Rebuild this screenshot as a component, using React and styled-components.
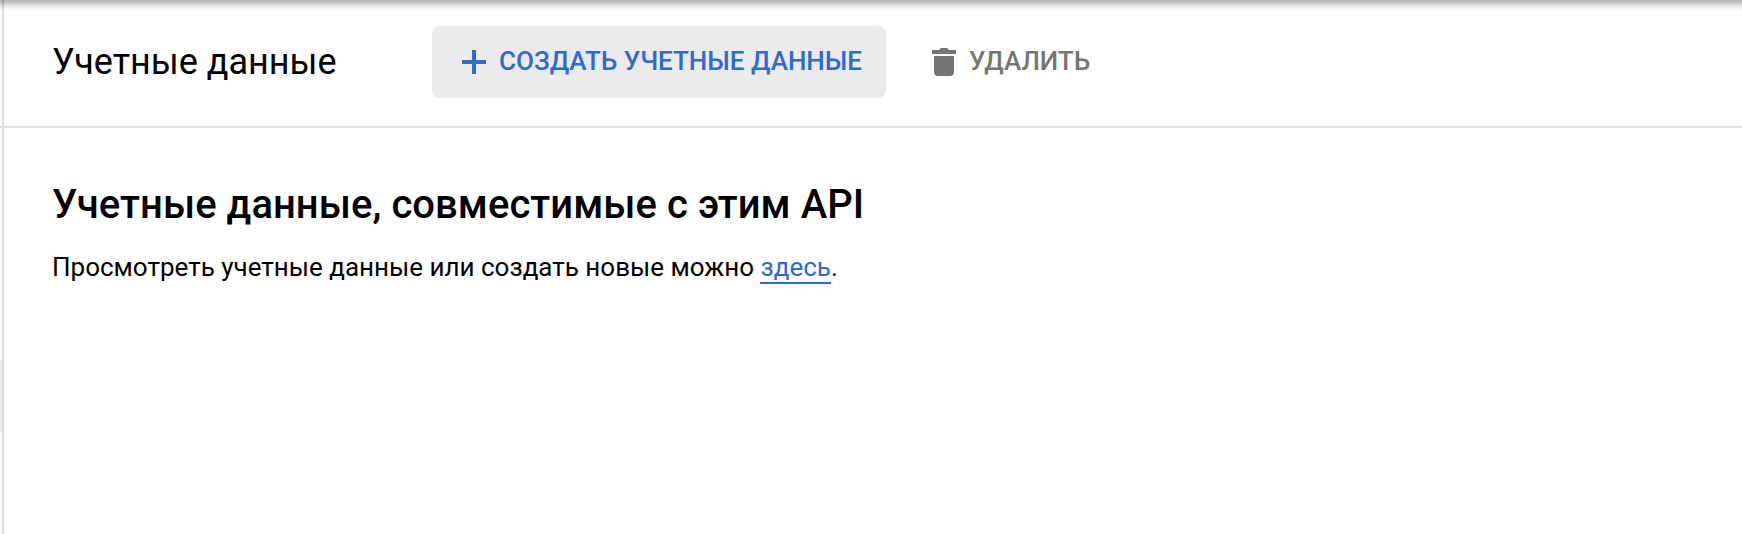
import React from "react";
import styled, { createGlobalStyle } from "styled-components";

const GlobalStyle = createGlobalStyle`
  body {
    margin: 0;
    background: #fefefe;
    color: #000;
    font-family: Roboto, "Liberation Sans", sans-serif;
    overflow: hidden;
  }
`;

const Page = styled.div`
  position: relative;
  display: flex;
  height: 534px;
`;

const TopShadow = styled.div`
  position: absolute;
  inset: 0 0 auto;
  height: 12px;
  pointer-events: none;
  background: linear-gradient(
    rgba(0, 0, 0, 0.3) 0,
    rgba(0, 0, 0, 0.21) 3px,
    rgba(0, 0, 0, 0.09) 6px,
    rgba(0, 0, 0, 0.02) 9px,
    transparent 12px
  );
`;

const NavEdge = styled.nav`
  flex: none;
  width: 2px;
  display: flex;
  flex-direction: column;
  background: #f8f8f8;
  border-right: 2px solid #dcdcdc;
`;

const NavHeader = styled.div`
  height: 126px;
  background: #fefefe;
  border-bottom: 2px solid #e0e0e0;
`;

const NavSelected = styled.div`
  margin-top: 232px;
  height: 72px;
  background: #e8edf8;
`;

const Main = styled.main`
  flex: 1;
  min-width: 0;
`;

const Toolbar = styled.header`
  display: flex;
  align-items: center;
  box-sizing: border-box;
  height: 128px;
  padding: 0 0 2px 48px;
  border-bottom: 2px solid #e0e0e0;
`;

const Title = styled.h1`
  margin: 0;
  width: 380px;
  font-size: 36px;
  line-height: 48px;
  font-weight: 400;
  white-space: nowrap;
`;

const Action = styled.button`
  display: flex;
  align-items: center;
  gap: 13px;
  width: ${(p) => p.$width}px;
  height: 72px;
  margin: 0 16px 0 0;
  padding: 0 0 0 30px;
  border: 0;
  border-radius: 8px;
  background: ${(p) => (p.$active ? "#ebebeb" : "transparent")};
  color: ${(p) => (p.$active ? "#3069d0" : "#757575")};
  font: 500 26px/36px Roboto, "Liberation Sans", sans-serif;
  white-space: nowrap;
`;

const Label = styled.span`
  padding-bottom: 2px;
`;

const Glyph = styled.svg`
  flex: none;
  width: 24px;
  height: 28px;
  fill: currentColor;
`;

const Content = styled.section`
  padding: 53px 48px;
`;

const Heading = styled.h2`
  margin: 0;
  font-size: 40px;
  line-height: 48px;
  font-weight: 500;
  letter-spacing: 0.05px;
`;

const Text = styled.p`
  margin: 18px 0 0;
  font-size: 26px;
  line-height: 40px;
`;

const Link = styled.a`
  color: #3069d0;
  text-decoration: none;
  border-bottom: 2px solid #3069d0;
`;

export default function App() {
  return (
    <>
      <GlobalStyle />
      <Page>
        <NavEdge>
          <NavHeader />
          <NavSelected />
        </NavEdge>
        <Main>
          <Toolbar>
            <Title>Учетные данные</Title>
            <Action $active $width={454}>
              <Glyph viewBox="0 0 24 28">
                <path d="M10 2h4v10h10v4H14v10h-4V16H0v-4h10z" />
              </Glyph>
              <Label>СОЗДАТЬ УЧЕТНЫЕ ДАННЫЕ</Label>
            </Action>
            <Action $width={220}>
              <Glyph viewBox="0 0 24 28">
                <path d="M0 2h7l2-2h6l2 2h7v4H0zM2 8h20v16a4 4 0 0 1-4 4H6a4 4 0 0 1-4-4z" />
              </Glyph>
              <Label>УДАЛИТЬ</Label>
            </Action>
          </Toolbar>
          <Content>
            <Heading>Учетные данные, совместимые с этим API</Heading>
            <Text>
              Просмотреть учетные данные или создать новые можно <Link href="#">здесь</Link>.
            </Text>
          </Content>
        </Main>
        <TopShadow />
      </Page>
    </>
  );
}
